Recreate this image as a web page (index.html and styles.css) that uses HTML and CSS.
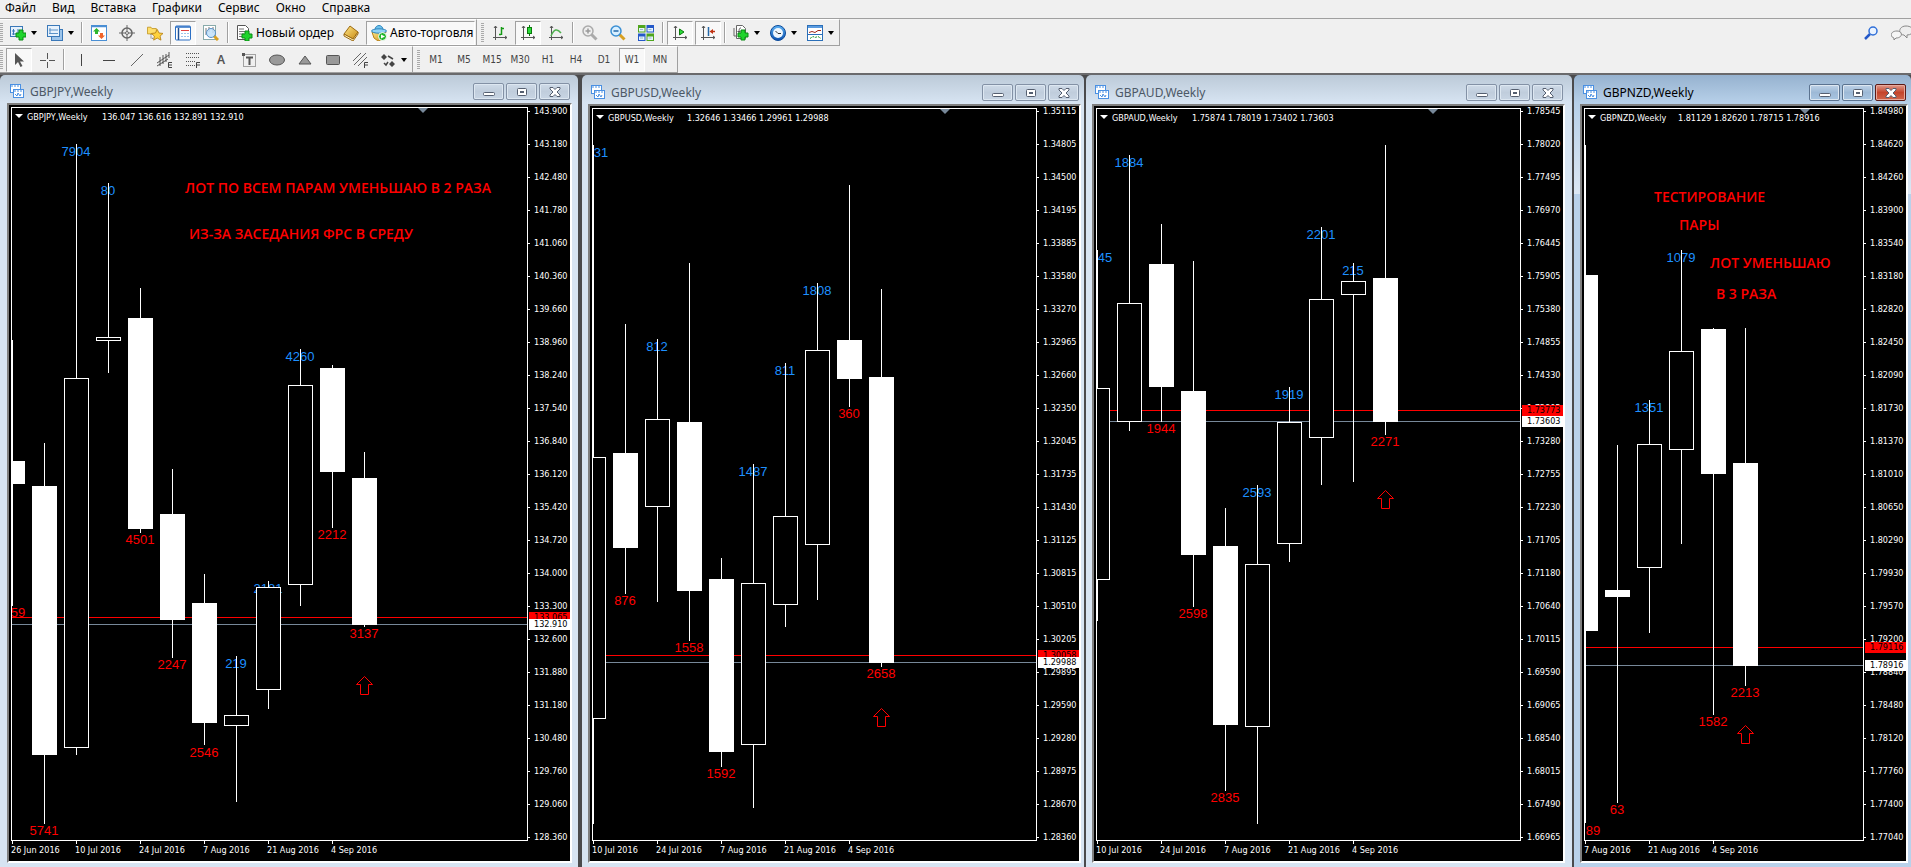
FILE: index.html
```html
<!DOCTYPE html>
<html lang="ru">
<head>
<meta charset="utf-8">
<title>GBPNZD,Weekly</title>
<link rel="stylesheet" href="styles.css">
</head>
<body>
<svg class="defs" aria-hidden="true">
  <defs>
    <linearGradient id="blue" x1="0" y1="0" x2="0" y2="1"><stop offset="0" stop-color="#5fb4f5"/><stop offset="1" stop-color="#0a4fae"/></linearGradient>
    <linearGradient id="gold" x1="0" y1="0" x2="1" y2="1"><stop offset="0" stop-color="#ffe88a"/><stop offset="1" stop-color="#c98a12"/></linearGradient>
  </defs>
  <symbol id="plus" viewBox="0 0 12 12"><path d="M4 1h4v3h3v4H8v3H4V8H1V4h3z" fill="#1fd42c" stroke="#0b8a14"/></symbol>
  <symbol id="app" viewBox="0 0 14 14">
    <rect x=".5" y=".5" width="10" height="8" fill="#fff" stroke="#4a90e2"/><path d="M1 2h9" stroke="#4a90e2" stroke-dasharray="2 1"/>
    <rect x="3.500" y="5.500" width="10" height="8" fill="#fff" stroke="#4a90e2"/><path d="M4 7h9" stroke="#4a90e2" stroke-dasharray="2 1"/><path d="M5 10l2 2 1-3 2 3 1-2" fill="none" stroke="#4a90e2"/>
  </symbol>
  <symbol id="min" viewBox="0 0 12 10"><rect x=".5" y="5.500" width="11" height="3" rx="1" fill="#fff" stroke="#555f70"/></symbol>
  <symbol id="max" viewBox="0 0 12 10"><rect x="1.500" y="1.500" width="9" height="7" rx="1" fill="#fff" stroke="#555f70"/><rect x="4.500" y="4.500" width="3" height="1" fill="#fff" stroke="#555f70"/></symbol>
  <symbol id="close" viewBox="0 0 12 10"><path d="M1 .5h3l2 2 2-2h3v1.500L8 5l3 3v1.500H8l-2-2-2 2H1V8l3-3-3-3z" fill="#fff" stroke="#555f70"/></symbol>
  <symbol id="caret" viewBox="0 0 6 4"><path d="M0 0h6L3 4z"/></symbol>
  <symbol id="up" viewBox="-10 -1 20 21"><path d="M.5.5l8 8h-4v10h-8v-10h-4z" fill="none" stroke="#f00"/></symbol>
  <symbol id="axes" viewBox="0 0 16 16"><path d="M3.500 1v14M1 12.500h14M2 3l1.500-2L5 3M13 11l2 1.500-2 1.500" fill="none" stroke="#555"/></symbol>
</svg>

<nav class="menu">
  <button>Файл</button><button>Вид</button><button>Вставка</button><button>Графики</button><button>Сервис</button><button>Окно</button><button>Справка</button>
</nav>

<div class="bar">
  <div class="tools">
    <span class="grip"></span>
    <button class="btn drop" aria-label="Новый график"><svg class="ico" viewBox="0 0 16 16"><rect x=".5" y="1.500" width="12" height="10" fill="#e6f1fc" stroke="#3a78b8"/><path d="M3.500 4v6M2 6h3M8 4v5M2 9h8" stroke="#3a78b8"/><use href="#plus" x="5" y="4" width="12" height="12"/></svg><svg class="caret"><use href="#caret"/></svg></button>
    <button class="btn drop" aria-label="Профили"><svg class="ico" viewBox="0 0 16 16"><rect x="4.500" y="4.500" width="11" height="11" fill="#9cc4ea" stroke="#3a78b8"/><rect x=".5" y=".5" width="12" height="11" fill="#e6f1fc" stroke="#3a78b8"/><path d="M3 3v6M2 5h9M2 8.500h9" stroke="#5a92c8"/></svg><svg class="caret"><use href="#caret"/></svg></button>
    <span class="sep"></span>
    <button class="btn" aria-label="Обзор рынка"><svg class="ico" viewBox="0 0 16 16"><rect x=".5" y=".5" width="15" height="15" fill="#fff" stroke="#4a8fd4"/><path d="M.5 1.500h15" stroke="#4a8fd4" stroke-width="1.500"/><path d="M5.500 3L9 6.500H7V9H4V6.500H2z" fill="#2db52d"/><path d="M10.500 14L7 10.500h2V8h3v2.500h2z" fill="#f0642a"/></svg></button>
    <button class="btn" aria-label="Окно данных"><svg class="ico" viewBox="0 0 16 16"><g fill="none" stroke="#666"><circle cx="8" cy="8" r="5" stroke-width="1.500"/><circle cx="8" cy="8" r="1.500"/><path d="M8 0v6M8 10v6M0 8h6M10 8h6"/></g></svg></button>
    <button class="btn" aria-label="Навигатор"><svg class="ico" viewBox="0 0 18 16"><path d="M.5 1.500h4l1 1.500h5v6H.5z" fill="#ffdf6b" stroke="#c49a2a"/><path d="M4.500 9v5h4" fill="none" stroke="#444" stroke-dasharray="1 1"/><path d="M11.500 4l2 4 4.500.500-3.300 3 1 4.500-4.200-2.300-4 2.300.8-4.500L5 8.500 9.500 8z" fill="#ffd23c" stroke="#b98316"/></svg></button>
    <button class="btn on" aria-label="Терминал"><svg class="ico" viewBox="0 0 16 16"><rect x=".5" y="1" width="15" height="14" rx="1" fill="#fff" stroke="#2b6fc4"/><path d="M1 2h14" stroke="#2b6fc4" stroke-width="1.500"/><path d="M3.500 3v12" stroke="#1d4f94" stroke-width="1.500"/><path d="M6 5.500h8" stroke="#e04040"/><path d="M6 8.500h8M6 11.500h8" stroke="#9cc4ea" stroke-dasharray="2 1"/></svg></button>
    <button class="btn" aria-label="Тестер стратегий"><svg class="ico" viewBox="0 0 16 16"><rect x=".5" y=".5" width="12" height="14" fill="#fff" stroke="#8aa"/><path d="M3 3v7M6 2v5M10 2v6" stroke="#777"/><path d="M11 11l4 4" stroke="#d8a020" stroke-width="3"/><circle cx="8" cy="8" r="4.500" fill="#bfe0fa" fill-opacity=".85" stroke="#5a92c8"/></svg></button>
    <span class="sep"></span>
    <button class="btn text"><svg class="ico" viewBox="0 0 16 16"><path d="M.5.5h8l3 3v11H.5z" fill="#fff" stroke="#555"/><path d="M2 4h5M2 6.500h7M2 9h5M2 11.500h4" stroke="#777"/><use href="#plus" x="4" y="5" width="12" height="12"/></svg>Новый ордер</button>
    <button class="btn" aria-label="MetaEditor"><svg class="ico" viewBox="0 0 16 16"><path d="M7 1l8 6-5 7-9-5z" fill="url(#gold)" stroke="#9c6a10"/><path d="M1 9v2l9 5 5-7V7l-5 7z" fill="#fff3c4" stroke="#9c6a10"/></svg></button>
    <button class="btn text on"><svg class="ico" viewBox="0 0 16 16"><path d="M1 7h14l-3 7-5 2-4-3z" fill="url(#gold)" stroke="#b98316"/><path d="M4 5c0-6 8-6 8 0z" fill="#6fc3ee" stroke="#2f86bd"/><ellipse cx="8" cy="6" rx="7.500" ry="2.200" fill="#8ed2f5" stroke="#2f86bd"/><circle cx="11.500" cy="11.500" r="4" fill="#20b52c" stroke="#fff"/><path d="M10 9.500l4 2-4 2z" fill="#fff"/></svg>Авто-торговля</button>
  </div>
  <div class="tools">
    <span class="grip"></span>
    <button class="btn" aria-label="Бары"><svg class="ico" viewBox="0 0 16 16"><use href="#axes"/><path d="M9.500 2v8M7 9.500h2M10 3.500h2" stroke="#149a14" stroke-width="1.500"/></svg></button>
    <button class="btn on" aria-label="Свечи"><svg class="ico" viewBox="0 0 16 16"><use href="#axes"/><path d="M9.500 0v11" stroke="#0c7a0c"/><rect x="7.500" y="2.500" width="4" height="6" fill="#2bdc3a" stroke="#0c7a0c"/></svg></button>
    <button class="btn" aria-label="Линия"><svg class="ico" viewBox="0 0 16 16"><use href="#axes"/><path d="M3 11c3-7 6-8 10-3" fill="none" stroke="#4fb04f" stroke-width="1.500"/></svg></button>
    <span class="sep"></span>
    <button class="btn" aria-label="Увеличить"><svg class="ico" viewBox="0 0 16 16"><path d="M9.500 9.500l5 5" stroke="#aaa" stroke-width="3"/><circle cx="6" cy="6" r="5" fill="#eee" stroke="#aaa" stroke-width="1.500"/><path d="M3.500 6h5M6 3.500v5" stroke="#999" stroke-width="1.500"/></svg></button>
    <button class="btn" aria-label="Уменьшить"><svg class="ico" viewBox="0 0 16 16"><path d="M9.500 9.500l5 5" stroke="#d8a020" stroke-width="3"/><circle cx="6" cy="6" r="5" fill="#d8efff" stroke="#3a8fd4" stroke-width="1.500"/><path d="M3.500 6h5" stroke="#2468a8" stroke-width="1.500"/></svg></button>
    <button class="btn" aria-label="Окна рядом"><svg class="ico" viewBox="0 0 16 16"><path d="M0 0h7.500v7.500H0zM8.500 8.500H16V16H8.500z" fill="#4fa51e"/><path d="M8.500 0H16v7.500H8.500zM0 8.500h7.500V16H0z" fill="#2458c8"/><path d="M1 3h5.500v3.500H1zM9.500 3H15v3.500H9.500zM1 11.500h5.500V15H1zM9.500 11.500H15V15H9.500z" fill="#e8f3ff"/><path d="M2 4.500h3M10.500 4.500h3M2 13h3M10.500 13h3" stroke="#9bc"/></svg></button>
    <span class="sep"></span>
    <button class="btn on" aria-label="Автопрокрутка"><svg class="ico" viewBox="0 0 16 16"><use href="#axes"/><path d="M7.500 4l4.500 3-4.500 3z" fill="#2bdc3a" stroke="#0c7a0c"/></svg></button>
    <button class="btn on" aria-label="Сдвиг графика"><svg class="ico" viewBox="0 0 16 16"><use href="#axes"/><path d="M8.500 2v9" stroke="#2468a8" stroke-width="1.500"/><path d="M15 6.500h-3" stroke="#c03010" stroke-width="1.500"/><path d="M9.500 6.500L13 4v5z" fill="#c03010"/></svg></button>
    <span class="sep"></span>
    <button class="btn drop" aria-label="Индикаторы"><svg class="ico" viewBox="0 0 16 16"><path d="M3.500.5h6l3 3v10h-9z" fill="#fff" stroke="#666"/><path d="M1 3v8h2" fill="none" stroke="#666"/><path d="M8 3c-2 0-2 1-2 8M4.500 6.500h3" fill="none" stroke="#555"/><use href="#plus" x="4" y="4" width="12" height="12"/></svg><svg class="caret"><use href="#caret"/></svg></button>
    <button class="btn drop" aria-label="Периоды"><svg class="ico" viewBox="0 0 16 16"><circle cx="8" cy="8" r="7.500" fill="url(#blue)" stroke="#0b4a9a"/><circle cx="8" cy="8" r="5" fill="#eef7ff"/><path d="M5.500 6L8 8.500h3" fill="none" stroke="#333"/></svg><svg class="caret"><use href="#caret"/></svg></button>
    <button class="btn drop" aria-label="Шаблоны"><svg class="ico" viewBox="0 0 16 16"><rect x=".5" y=".5" width="15" height="15" fill="#fff" stroke="#2b6fb8"/><path d="M1 2h14" stroke="#5a9be0" stroke-width="2"/><path d="M2 7.500l3-1 3 1 3-2h3" fill="none" stroke="#a02818"/><path d="M1 9.500h14" stroke="#2b6fb8"/><path d="M3 13.500l3-2 2 1 3-1 3 2" fill="none" stroke="#189a28" stroke-dasharray="2 1"/></svg><svg class="caret"><use href="#caret"/></svg></button>
  </div>
  <div class="corner">
    <button class="btn" aria-label="Поиск"><svg class="ico" viewBox="0 0 16 16"><path d="M2 14l5-5" stroke="#2458c8" stroke-width="2.500"/><circle cx="10" cy="6" r="4" fill="#eaf3ff" stroke="#2f6fd8" stroke-width="1.500"/></svg></button>
    <button class="chat" aria-label="Чат"><svg viewBox="0 0 22 16"><path d="M15 1c-8 0-8 9-2 9l3 3v-3c8 0 8-9-1-9z" fill="#eee" stroke="#888"/><path d="M6 6c-7 0-7 6-3 7v2l2-2c7 0 7-7 1-7z" fill="#f6f6f6" stroke="#888"/></svg></button>
  </div>
</div>

<div class="bar">
  <div class="tools">
    <span class="grip"></span>
    <button class="btn on" aria-label="Курсор"><svg class="ico" viewBox="0 0 16 16"><path d="M4 1v12l3-3 2.500 5 2-1L9 9.500h4z" fill="#555"/></svg></button>
    <button class="btn" aria-label="Перекрестие"><svg class="ico" viewBox="0 0 16 16"><path d="M8.500 1v6M8.500 10v6M1 8.500h6M10 8.500h6" stroke="#555"/></svg></button>
    <span class="sep"></span>
    <button class="btn" aria-label="Вертикальная линия"><svg class="ico" viewBox="0 0 16 16"><path d="M8.500 2v12" stroke="#444"/></svg></button>
    <button class="btn" aria-label="Горизонтальная линия"><svg class="ico" viewBox="0 0 16 16"><path d="M2 8.500h12" stroke="#444"/></svg></button>
    <button class="btn" aria-label="Трендовая линия"><svg class="ico" viewBox="0 0 16 16"><path d="M2 14L14 2" stroke="#666"/></svg></button>
    <button class="btn" aria-label="Канал"><svg class="ico" viewBox="0 0 16 16"><path d="M0 11l12-8M0 14l11-7M3 5v9M6 3v9M9 2v8M12 0v6" stroke="#555"/><path d="M15 10.500h-3.500v5H15M12 13h3" fill="none" stroke="#444"/></svg></button>
    <button class="btn" aria-label="Линии Фибоначчи"><svg class="ico" viewBox="0 0 16 16"><path d="M1 1.500h14M1 5.500h14M1 9.500h10M1 13.500h9" stroke="#555" stroke-dasharray="1 1"/><path d="M15 10.500h-3.500V16M12 13h3" fill="none" stroke="#444"/></svg></button>
    <button class="btn letter">A</button>
    <button class="btn" aria-label="Метка"><svg class="ico" viewBox="0 0 16 16"><rect x="2.500" y="2.500" width="12" height="12" fill="none" stroke="#555" stroke-dasharray="1 1"/><path d="M5 5.500h7M8.500 5v8" stroke="#555" stroke-width="2"/><path d="M1 1h3v3H1z" fill="#555"/></svg></button>
    <button class="btn" aria-label="Эллипс"><svg class="ico" viewBox="0 0 16 16"><ellipse cx="8" cy="8" rx="7.500" ry="5" fill="#999" stroke="#555"/></svg></button>
    <button class="btn" aria-label="Треугольник"><svg class="ico" viewBox="0 0 16 16"><path d="M8 4l6 8H2z" fill="#999" stroke="#555"/></svg></button>
    <button class="btn" aria-label="Прямоугольник"><svg class="ico" viewBox="0 0 16 16"><rect x="1.500" y="3.500" width="13" height="9" rx="1" fill="#999" stroke="#555"/></svg></button>
    <button class="btn" aria-label="Веер"><svg class="ico" viewBox="0 0 16 16"><path d="M0 9l8-8M1 13L13 1M5 14l9-9" stroke="#666"/><path d="M15 10.500h-3.500V16M12 13h3" fill="none" stroke="#444"/></svg></button>
    <button class="btn drop" aria-label="Стрелки"><svg class="ico" viewBox="0 0 16 16"><path d="M1 5l3-3 3 3-3 3zM9 12l3-3 3 3-3 3z" fill="#444"/><path d="M4 11l2 2 2-3M8 4l5 3" fill="none" stroke="#444" stroke-width="1.500"/></svg><svg class="caret"><use href="#caret"/></svg></button>
  </div>
  <div class="tools frames">
    <span class="grip"></span>
    <button class="btn">M1</button><button class="btn">M5</button><button class="btn">M15</button><button class="btn">M30</button><button class="btn">H1</button><button class="btn">H4</button><button class="btn">D1</button><button class="btn on">W1</button><button class="btn">MN</button>
  </div>
</div>

<main class="desk">
  <section class="win win-a">
    <header class="title"><svg class="app"><use href="#app"/></svg><h2>GBPJPY,Weekly</h2>
      <button aria-label="Свернуть"><svg><use href="#min"/></svg></button><button aria-label="Развернуть"><svg><use href="#max"/></svg></button><button aria-label="Закрыть"><svg><use href="#close"/></svg></button></header>
    <div class="chart">
      <svg class="plot">
        <path class="mark" d="M406 0h10l-5 5z"/>
        <path class="menu-mark" d="M3 6h8l-4 4z"/>
        <g class="info"><text x="15" y="12">GBPJPY,Weekly</text><text x="90" y="12">136.047 136.616 132.891 132.910</text></g>
        <rect class="ask" y="509" width="100%" height="1"/><rect class="bid" y="516" width="100%" height="1"/>
        <g class="high"><text x="64" y="48">7904</text><text x="96" y="87">80</text><text x="224" y="560">219</text><text x="256" y="485">2181</text><text x="288" y="253">4260</text></g>
        <g class="low"><text x="6" y="509">59</text><text x="32" y="727">5741</text><text x="128" y="436">4501</text><text x="160" y="561">2247</text><text x="192" y="649">2546</text><text x="320" y="431">2212</text><text x="352" y="530">3137</text></g>
        <g class="candles" transform="translate(.5 .5)">
          <path d="M0 231V497"/><rect class="down" x="-12" y="353" width="24" height="22"/>
          <path d="M32 334V715"/><rect class="down" x="20" y="378" width="24" height="268"/>
          <path d="M64 35V646"/><rect x="52" y="270" width="24" height="369"/>
          <path d="M96 74V264"/><rect x="84" y="229" width="24" height="3"/>
          <path d="M128 179V424"/><rect class="down" x="116" y="210" width="24" height="210"/>
          <path d="M160 360V549"/><rect class="down" x="148" y="406" width="24" height="105"/>
          <path d="M192 465V636"/><rect class="down" x="180" y="495" width="24" height="119"/>
          <path d="M224 547V693"/><rect x="212" y="607" width="24" height="10"/>
          <path d="M256 472V600"/><rect x="244" y="479" width="24" height="102"/>
          <path d="M288 240V497"/><rect x="276" y="277" width="24" height="199"/>
          <path d="M320 256V419"/><rect class="down" x="308" y="260" width="24" height="103"/>
          <path d="M352 343V518"/><rect class="down" x="340" y="370" width="24" height="146"/>
        </g>
        <use href="#up" x="342" y="567" width="20" height="21"/>
        <g class="note"><text x="173" y="85">ЛОТ ПО ВСЕМ ПАРАМ УМЕНЬШАЮ В 2 РАЗА</text><text x="177" y="131">ИЗ-ЗА ЗАСЕДАНИЯ ФРС В СРЕДУ</text></g>
      </svg>
      <ol class="prices"><li>143.900</li><li>143.180</li><li>142.480</li><li>141.780</li><li>141.060</li><li>140.360</li><li>139.660</li><li>138.960</li><li>138.240</li><li>137.540</li><li>136.840</li><li>136.120</li><li>135.420</li><li>134.720</li><li>134.000</li><li>133.300</li><li>132.600</li><li>131.880</li><li>131.180</li><li>130.480</li><li>129.760</li><li>129.060</li><li>128.360</li>
        <li class="tag tag-ask" style="top:507px">133.065</li><li class="tag" style="top:514px">132.910</li></ol>
      <ol class="dates"><li>26 Jun 2016</li><li>10 Jul 2016</li><li>24 Jul 2016</li><li>7 Aug 2016</li><li>21 Aug 2016</li><li>4 Sep 2016</li></ol>
    </div>
  </section>

  <section class="win win-b">
    <header class="title"><svg class="app"><use href="#app"/></svg><h2>GBPUSD,Weekly</h2>
      <button aria-label="Свернуть"><svg><use href="#min"/></svg></button><button aria-label="Развернуть"><svg><use href="#max"/></svg></button><button aria-label="Закрыть"><svg><use href="#close"/></svg></button></header>
    <div class="chart">
      <svg class="plot">
        <path class="mark" d="M347 0h10l-5 5z"/>
        <path class="menu-mark" d="M3 6h8l-4 4z"/>
        <g class="info"><text x="15" y="12">GBPUSD,Weekly</text><text x="94" y="12">1.32646 1.33466 1.29961 1.29988</text></g>
        <rect class="ask" y="546" width="100%" height="1"/><rect class="bid" y="553" width="100%" height="1"/>
        <g class="high"><text x="8" y="48">31</text><text x="64" y="242">812</text><text x="160" y="367">1487</text><text x="192" y="266">811</text><text x="224" y="186">1808</text></g>
        <g class="low"><text x="32" y="496">876</text><text x="96" y="543">1558</text><text x="128" y="669">1592</text><text x="256" y="309">360</text><text x="288" y="569">2658</text></g>
        <g class="candles" transform="translate(.5 .5)">
          <path d="M0 35V714"/><rect x="-12" y="348" width="24" height="261"/>
          <path d="M32 214V484"/><rect class="down" x="20" y="344" width="24" height="94"/>
          <path d="M64 229V492"/><rect x="52" y="310" width="24" height="87"/>
          <path d="M96 153V531"/><rect class="down" x="84" y="313" width="24" height="168"/>
          <path d="M128 448V657"/><rect class="down" x="116" y="470" width="24" height="172"/>
          <path d="M160 354V698"/><rect x="148" y="474" width="24" height="161"/>
          <path d="M192 253V517"/><rect x="180" y="407" width="24" height="88"/>
          <path d="M224 173V490"/><rect x="212" y="241" width="24" height="194"/>
          <path d="M256 75V297"/><rect class="down" x="244" y="231" width="24" height="38"/>
          <path d="M288 179V557"/><rect class="down" x="276" y="268" width="24" height="285"/>
        </g>
        <use href="#up" x="278" y="598" width="20" height="21"/>
      </svg>
      <ol class="prices"><li>1.35115</li><li>1.34805</li><li>1.34500</li><li>1.34195</li><li>1.33885</li><li>1.33580</li><li>1.33270</li><li>1.32965</li><li>1.32660</li><li>1.32350</li><li>1.32045</li><li>1.31735</li><li>1.31430</li><li>1.31125</li><li>1.30815</li><li>1.30510</li><li>1.30205</li><li>1.29895</li><li>1.29590</li><li>1.29280</li><li>1.28975</li><li>1.28670</li><li>1.28360</li>
        <li class="tag tag-ask" style="top:544px">1.30058</li><li class="tag" style="top:551px">1.29988</li></ol>
      <ol class="dates"><li>10 Jul 2016</li><li>24 Jul 2016</li><li>7 Aug 2016</li><li>21 Aug 2016</li><li>4 Sep 2016</li></ol>
    </div>
  </section>

  <section class="win win-c">
    <header class="title"><svg class="app"><use href="#app"/></svg><h2>GBPAUD,Weekly</h2>
      <button aria-label="Свернуть"><svg><use href="#min"/></svg></button><button aria-label="Развернуть"><svg><use href="#max"/></svg></button><button aria-label="Закрыть"><svg><use href="#close"/></svg></button></header>
    <div class="chart">
      <svg class="plot">
        <path class="mark" d="M331 0h10l-5 5z"/>
        <path class="menu-mark" d="M3 6h8l-4 4z"/>
        <g class="info"><text x="15" y="12">GBPAUD,Weekly</text><text x="95" y="12">1.75874 1.78019 1.73402 1.73603</text></g>
        <rect class="ask" y="301" width="100%" height="1"/><rect class="bid" y="312" width="100%" height="1"/>
        <g class="high"><text x="8" y="153">45</text><text x="32" y="58">1884</text><text x="160" y="388">2593</text><text x="192" y="290">1919</text><text x="224" y="130">2201</text><text x="256" y="166">215</text></g>
        <g class="low"><text x="64" y="324">1944</text><text x="96" y="509">2598</text><text x="128" y="693">2835</text><text x="288" y="337">2271</text></g>
        <g class="candles" transform="translate(.5 .5)">
          <path d="M0 140V511"/><rect x="-12" y="279" width="24" height="191"/>
          <path d="M32 45V321"/><rect x="20" y="194" width="24" height="118"/>
          <path d="M64 114V312"/><rect class="down" x="52" y="155" width="24" height="122"/>
          <path d="M96 151V497"/><rect class="down" x="84" y="282" width="24" height="163"/>
          <path d="M128 398V681"/><rect class="down" x="116" y="437" width="24" height="178"/>
          <path d="M160 375V714"/><rect x="148" y="455" width="24" height="162"/>
          <path d="M192 277V452"/><rect x="180" y="313" width="24" height="121"/>
          <path d="M224 117V375"/><rect x="212" y="190" width="24" height="138"/>
          <path d="M256 153V372"/><rect x="244" y="172" width="24" height="13"/>
          <path d="M288 35V325"/><rect class="down" x="276" y="169" width="24" height="143"/>
        </g>
        <use href="#up" x="278" y="380" width="20" height="21"/>
      </svg>
      <ol class="prices"><li>1.78545</li><li>1.78020</li><li>1.77495</li><li>1.76970</li><li>1.76445</li><li>1.75905</li><li>1.75380</li><li>1.74855</li><li>1.74330</li><li>1.73805</li><li>1.73280</li><li>1.72755</li><li>1.72230</li><li>1.71705</li><li>1.71180</li><li>1.70640</li><li>1.70115</li><li>1.69590</li><li>1.69065</li><li>1.68540</li><li>1.68015</li><li>1.67490</li><li>1.66965</li>
        <li class="tag tag-ask" style="top:299px">1.73773</li><li class="tag" style="top:310px">1.73603</li></ol>
      <ol class="dates"><li>10 Jul 2016</li><li>24 Jul 2016</li><li>7 Aug 2016</li><li>21 Aug 2016</li><li>4 Sep 2016</li></ol>
    </div>
  </section>

  <section class="win win-d active">
    <header class="title"><svg class="app"><use href="#app"/></svg><h2>GBPNZD,Weekly</h2>
      <button aria-label="Свернуть"><svg><use href="#min"/></svg></button><button aria-label="Развернуть"><svg><use href="#max"/></svg></button><button class="shut" aria-label="Закрыть"><svg><use href="#close"/></svg></button></header>
    <div class="chart">
      <svg class="plot">
        <path class="mark" d="M215 0h10l-5 5z"/>
        <path class="menu-mark" d="M3 6h8l-4 4z"/>
        <g class="info"><text x="15" y="12">GBPNZD,Weekly</text><text x="93" y="12">1.81129 1.82620 1.78715 1.78916</text></g>
        <rect class="ask" y="538" width="100%" height="1"/><rect class="bid" y="556" width="100%" height="1"/>
        <g class="high"><text x="64" y="303">1351</text><text x="96" y="153">1079</text></g>
        <g class="low"><text x="8" y="726">89</text><text x="32" y="705">63</text><text x="128" y="617">1582</text><text x="160" y="588">2213</text></g>
        <g class="candles" transform="translate(.5 .5)">
          <path d="M0 35V713"/><rect class="down" x="-12" y="166" width="24" height="355"/>
          <path d="M32 335V693"/><rect class="down" x="20" y="481" width="24" height="6"/>
          <path d="M64 290V523"/><rect x="52" y="335" width="24" height="123"/>
          <path d="M96 140V434"/><rect x="84" y="242" width="24" height="98"/>
          <path d="M128 218V605"/><rect class="down" x="116" y="220" width="24" height="144"/>
          <path d="M160 218V576"/><rect class="down" x="148" y="354" width="24" height="202"/>
        </g>
        <use href="#up" x="150" y="615" width="20" height="21"/>
        <g class="note"><text x="69" y="93">ТЕСТИРОВАНИЕ</text><text x="94" y="121">ПАРЫ</text><text x="125" y="159">ЛОТ УМЕНЬШАЮ</text><text x="131" y="190">В 3 РАЗА</text></g>
      </svg>
      <ol class="prices"><li>1.84980</li><li>1.84620</li><li>1.84260</li><li>1.83900</li><li>1.83540</li><li>1.83180</li><li>1.82820</li><li>1.82450</li><li>1.82090</li><li>1.81730</li><li>1.81370</li><li>1.81010</li><li>1.80650</li><li>1.80290</li><li>1.79930</li><li>1.79570</li><li>1.79200</li><li>1.78840</li><li>1.78480</li><li>1.78120</li><li>1.77760</li><li>1.77400</li><li>1.77040</li>
        <li class="tag tag-ask" style="top:536px">1.79116</li><li class="tag" style="top:554px">1.78916</li></ol>
      <ol class="dates"><li>7 Aug 2016</li><li>21 Aug 2016</li><li>4 Sep 2016</li></ol>
    </div>
  </section>
</main>
</body>
</html>
```
FILE: styles.css
```css
* { box-sizing: border-box; }
body {
  margin: 0;
  min-height: 100vh;
  display: flex;
  flex-direction: column;
  background: #f0f0f0;
  color: #000;
  font: 12px/16px "Noto Sans", sans-serif;
  overflow-x: hidden;
}
button { font: inherit; color: inherit; background: none; border: 0; padding: 0; }
ol { list-style: none; margin: 0; padding: 0; }
svg { display: block; }
.defs { width: 0; height: 0; position: absolute; }

.menu { display: flex; gap: 16px; height: 19px; padding: 0 5px 2px; border-bottom: 1px solid #a0a0a0; }

.bar { display: flex; height: 27px; }
.tools {
  display: flex;
  align-items: center;
  gap: 2px;
  padding-right: 1px;
  border-right: 1px solid #a0a0a0;
  border-bottom: 1px solid #a0a0a0;
  border-top: 1px solid #fff;
}
.grip { width: 3px; height: 20px; margin: 0 1px 0 0; background: repeating-linear-gradient(#aaa 0 1px, #f0f0f0 1px 2px); }
.tools + .tools .grip { margin-left: 4px; }
.btn { display: flex; align-items: center; justify-content: center; width: 26px; height: 24px; flex: none; border: 1px solid transparent; white-space: nowrap; }
.btn.on { background: #f8f8f8; border-color: #a0a0a0 #fff #fff #a0a0a0; }
.ico { width: 16px; height: 16px; flex: none; }
.drop { width: 35px; gap: 5px; padding-left: 3px; justify-content: flex-start; }
.caret { width: 6px; height: 4px; }
.text { width: auto; gap: 3px; padding: 0 1px 0 4px; }
.letter { font-weight: 600; color: #555; }
.sep { width: 2px; height: 21px; margin: 0 1px; background: #a0a0a0; border-right: 1px solid #fff; }
.frames { padding-right: 4px; font: 10px/14px "DejaVu Sans Condensed", "DejaVu Sans", sans-serif; color: #444; }
.corner { margin-left: auto; display: flex; align-items: center; gap: 7px; }
.chat { width: 20px; height: 16px; overflow: hidden; }
.chat svg { width: 22px; height: 16px; }

.desk {
  flex: 1;
  display: grid;
  grid-template-columns: 582fr 504fr 488fr 337fr;
  background: #4a4a4c;
  border-top: 2px solid #6a6a6c;
}
.win {
  display: flex;
  flex-direction: column;
  min-width: 0;
  padding: 0 7px 4px 6px;
  margin-right: 2px;
  border-radius: 5px 5px 0 0;
  background: linear-gradient(#bccad8, #d7e4f2 28px);
}
.win-a { padding: 0 6px 4px 7px; margin-right: 4px; }
.win-b { padding-right: 3px; }
.win-d { padding-right: 3px; margin-right: 0; }
.active { background: linear-gradient(#96b2cf, #b7d0e9 28px, #dce7f3 119px, #b9d1ea 119px); }

.title { display: flex; align-items: flex-end; gap: 2px; height: 29px; padding: 0 2px 3px 3px; color: #4c5866; }
.win-a .title { height: 28px; }
.active .title { color: #000; }
.app { width: 14px; height: 14px; margin: 0 4px 2px 0; }
.title h2 { flex: 1; margin: 0; font: 12px/16px "Noto Sans", sans-serif; white-space: nowrap; }
.title button {
  display: grid;
  place-items: center;
  width: 31px;
  height: 17px;
  border: 1px solid #8391a5;
  border-radius: 2px;
  background: linear-gradient(#cfdbe8, #c0cddc 50%, #c8d5e4);
  box-shadow: inset 0 0 0 1px #dde7f1;
}
.title button svg { width: 12px; height: 10px; }
.active .title button { background: linear-gradient(#bfd3e8, #9db9d6 50%, #a9c6e2); border-color: #5b7390; }
.active .title .shut { background: linear-gradient(#e09a8c, #c4452c 50%, #d0664c); border-color: #5c1a16; box-shadow: inset 0 0 0 1px #e8a99c; }

.chart {
  flex: 1;
  position: relative;
  display: grid;
  grid-template: minmax(0, 1fr) 20px / minmax(0, 1fr) 42px;
  padding: 0 0 0 2px;
  border: 2px solid;
  border-color: #7f7f7f #fff #fff #7f7f7f;
  background: #000;
  color: #fff;
  font: 9px/11px "DejaVu Sans Condensed", "DejaVu Sans", sans-serif;
}
.plot { width: 100%; height: calc(100% - 2px); margin-top: 2px; border: 1px solid #fff; overflow: hidden; }
.info { fill: #fff; }
.mark { fill: #778899; }
.menu-mark { fill: #fff; }
.ask { fill: #f00; }
.bid { fill: #778899; }
.high, .low { font: 13px "Liberation Sans", sans-serif; text-anchor: middle; }
.high { fill: #1e90ff; }
.low { fill: #f00; }
.candles { stroke: #fff; fill: #000; shape-rendering: crispEdges; }
.candles .down { fill: #fff; }
.note { font: 600 14px "Open Sans", sans-serif; fill: #f00; }

.prices { grid-row: 1 / 3; grid-column: 2; position: relative; display: flex; flex-direction: column; justify-content: flex-end; padding-bottom: 18px; }
.prices li { display: flex; align-items: center; gap: 4px; height: 11px; }
.prices li + li { margin-top: 22px; }
.prices li::before { content: ""; width: 2px; height: 1px; background: #fff; }
.prices .tag { position: absolute; left: 1px; right: 0; padding-left: 5px; margin: 0; background: #fff; color: #000; }
.prices .tag::before { content: none; }
.prices .tag-ask { background: #f00; }
.dates { grid-row: 2; grid-column: 1; display: flex; }
.dates li { width: 64px; flex: none; white-space: nowrap; }
.dates li::before { content: ""; display: block; width: 1px; height: 3px; margin: 0 0 1px 1px; background: #fff; }
```
